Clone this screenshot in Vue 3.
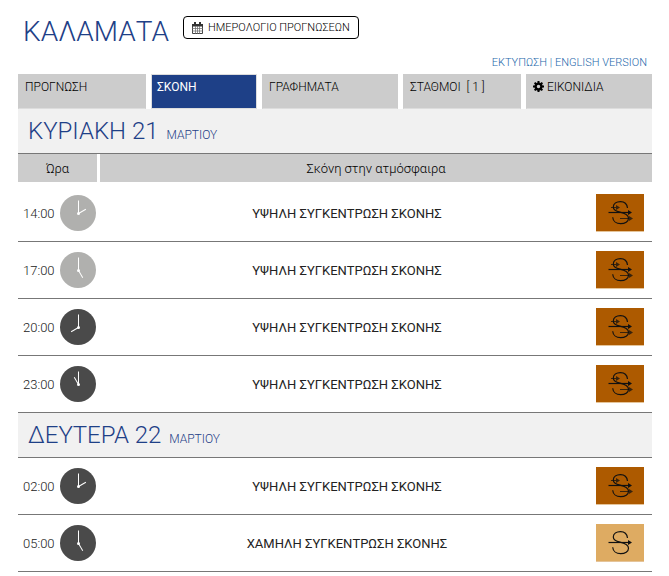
<script setup>
const tabs = [
  { label: 'ΠΡΟΓΝΩΣΗ' },
  { label: 'ΣΚΟΝΗ', active: true },
  { label: 'ΓΡΑΦΗΜΑΤΑ' },
  { label: 'ΣΤΑΘΜΟΙ \u00a0[ 1 ]' },
  { label: 'ΕΙΚΟΝΙΔΙΑ', gear: true },
]

const HIGH = 'ΥΨΗΛΗ ΣΥΓΚΕΝΤΡΩΣΗ ΣΚΟΝΗΣ'
const LOW = 'ΧΑΜΗΛΗ ΣΥΓΚΕΝΤΡΩΣΗ ΣΚΟΝΗΣ'

const days = [
  {
    name: 'ΚΥΡΙΑΚΗ 21',
    month: 'ΜΑΡΤΙΟΥ',
    head: true,
    rows: [
      { time: '14:00', light: true, text: HIGH, high: true },
      { time: '17:00', light: true, text: HIGH, high: true },
      { time: '20:00', text: HIGH, high: true },
      { time: '23:00', text: HIGH, high: true },
    ],
  },
  {
    name: 'ΔΕΥΤΕΡΑ 22',
    month: 'ΜΑΡΤΙΟΥ',
    rows: [
      { time: '02:00', text: HIGH, high: true },
      { time: '05:00', text: LOW },
    ],
  },
]

const hourAngle = (time) => (parseInt(time, 10) % 12) * 30
</script>

<template>
  <main class="page">
    <header class="top">
      <h1>ΚΑΛΑΜΑΤΑ</h1>
      <button type="button" class="calendar">
        <svg width="11" height="12" viewBox="0 0 11 12" aria-hidden="true">
          <path d="M.5 2.500h10v9H.5z" fill="#fff" stroke="#444" />
          <path d="M0 2h11v2.500H0zM2 0h2v3H2zM7 0h2v3H7z" fill="#333" />
          <path d="M3.500 4v8M5.500 4v8M7.500 4v8M0 6.500h11M0 9h11" stroke="#666" stroke-width=".7" />
        </svg>
        <span>ΗΜΕΡΟΛΟΓΙΟ ΠΡΟΓΝΩΣΕΩΝ</span>
      </button>
    </header>

    <div class="links">
      <a href="#print">ΕΚΤΥΠΩΣΗ</a> | <a href="#en">ENGLISH VERSION</a>
    </div>

    <nav class="tabs">
      <a v-for="tab in tabs" :key="tab.label" href="#" class="tab" :class="{ active: tab.active }">
        <svg v-if="tab.gear" width="11" height="11" viewBox="0 0 12 12" aria-hidden="true">
          <circle cx="6" cy="6" r="3.200" fill="none" stroke="#000" stroke-width="2.600" />
          <path
            d="M6 0v2.500M6 9.500V12M0 6h2.500M9.500 6H12M1.800 1.800l1.700 1.700M8.500 8.500l1.700 1.700M10.200 1.800L8.500 3.500M3.500 8.500l-1.700 1.700"
            stroke="#000" stroke-width="2.200"
          />
        </svg>
        {{ tab.label }}
      </a>
    </nav>

    <table>
      <colgroup>
        <col class="col-time" />
        <col />
        <col class="col-icon" />
      </colgroup>
      <tbody v-for="day in days" :key="day.name">
        <tr class="day">
          <th colspan="3" scope="rowgroup">{{ day.name }} <small>{{ day.month }}</small></th>
        </tr>
        <tr v-if="day.head" class="head">
          <th scope="col">Ώρα</th>
          <th scope="col" colspan="2">Σκόνη στην ατμόσφαιρα</th>
        </tr>
        <tr v-for="row in day.rows" :key="row.time" class="entry">
          <td>
            <div class="time">
              <span>{{ row.time }}</span>
              <svg class="clock" :class="{ light: row.light }" viewBox="0 0 36 36" aria-hidden="true">
                <circle cx="18" cy="18" r="18" />
                <path d="M18.500 18V5.500" />
                <path d="M18.500 18.500v-8.500" :transform="`rotate(${hourAngle(row.time)} 18.500 18.500)`" />
                <circle class="hub" cx="18.500" cy="18.500" r="1.500" />
              </svg>
            </div>
          </td>
          <td class="text">{{ row.text }}</td>
          <td>
            <svg class="dust" :class="{ high: row.high }" viewBox="0 0 48 37" aria-hidden="true">
              <path
                class="line"
                d="M31.500 14C31 10 28 7.700 24.500 7.700C20.500 7.700 17.300 9.700 17.300 13C17.300 16 20 17.300 24 18.200C29 19.300 32.500 20.700 32.500 24.200C32.500 27.500 29 29.700 24.700 29.700C20 29.700 17 27 16.700 23.300"
              />
              <path class="line" d="M12.500 18.500H33" />
              <path d="M32 16l4 2.500-4 2.500z" />
              <g v-if="row.high" class="extra">
                <path class="line" d="M15 13.500h7M24 24.500h11" />
                <path d="M20 11l4 2.500-4 2.500zM33 22l4 2.500-4 2.500z" />
              </g>
            </svg>
          </td>
        </tr>
      </tbody>
    </table>
  </main>
</template>

<style>
body {
  margin: 0;
  background: #fff;
}
</style>

<style scoped>
.page {
  padding: 14px 17px 4px 18px;
  font-family: Roboto, "Liberation Sans", sans-serif;
  font-size: 13px;
  font-weight: 300;
  color: #000;
}
.top {
  display: flex;
  align-items: flex-start;
  gap: 14px;
  padding: 0 5px;
}
h1 {
  margin: 0;
  font-size: 28px;
  line-height: 36px;
  font-weight: 300;
  color: #1e4087;
}
.calendar {
  display: flex;
  align-items: center;
  gap: 5px;
  height: 23px;
  margin-top: 2px;
  padding: 0 8px;
  border: 1px solid #000;
  border-radius: 4px;
  background: #fff;
  color: #000;
  font: inherit;
  font-size: 11px;
}
.links {
  padding: 4px 5px 2px 0;
  font-size: 11px;
  line-height: 18px;
  text-align: right;
  color: #2669ab;
}
.links a {
  color: inherit;
  text-decoration: none;
}
.tabs {
  display: grid;
  grid-template-columns: 128fr 106fr 136fr 118fr 126fr;
  gap: 5px;
}
.tab {
  height: 27px;
  padding: 4px 6px 2px;
  border: 1px solid #ccc;
  border-bottom-color: #ddd;
  background: #ccc;
  color: #000;
  font-size: 12px;
  line-height: 16px;
  text-decoration: none;
  white-space: nowrap;
}
.tab.active {
  padding-left: 5px;
  border-color: #ddd;
  background: #1e4087;
  color: #fff;
  font-weight: 400;
}
.tab svg {
  vertical-align: -1px;
}
table {
  width: 100%;
  table-layout: fixed;
  border-collapse: separate;
  border-spacing: 0;
}
.col-time {
  width: 82px;
}
.col-icon {
  width: 58px;
}
th,
td {
  padding: 0;
  font-weight: 300;
}
.day th {
  height: 44px;
  padding-left: 10px;
  border-bottom: 1px solid #777;
  background: #f1f1f1;
  color: #1e4087;
  font-size: 24px;
  line-height: 32px;
  text-align: left;
}
.day small {
  margin-left: 2px;
  font-size: 12px;
  line-height: 16px;
}
.head th {
  height: 28px;
  border-bottom: 3px solid #fff;
  background: #ccc;
  text-align: center;
}
.head th:first-child {
  border-right: 3px solid #fff;
}
.entry td {
  height: 56px;
  border-bottom: 1px solid #777;
}
.time {
  display: flex;
  align-items: center;
  justify-content: space-between;
  padding: 0 4px 0 5px;
  color: #222;
}
.clock {
  width: 36px;
  height: 36px;
  fill: #4a4a4a;
}
.clock.light {
  fill: #b0b0ae;
}
.clock path {
  stroke: #fff;
  stroke-width: 1;
}
.clock .hub {
  fill: #fff;
}
.entry .text {
  color: #222;
  font-weight: 400;
  text-align: center;
}
.dust {
  display: block;
  width: 48px;
  height: 37px;
  margin-left: 2px;
  border-bottom: 1px solid #e5c499;
  background: #deab62;
  fill: #111;
}
.dust.high {
  background: #ad5a00;
}
.line {
  fill: none;
  stroke: #111;
  stroke-width: 1.2;
}
.extra {
  opacity: 0.75;
}
</style>
